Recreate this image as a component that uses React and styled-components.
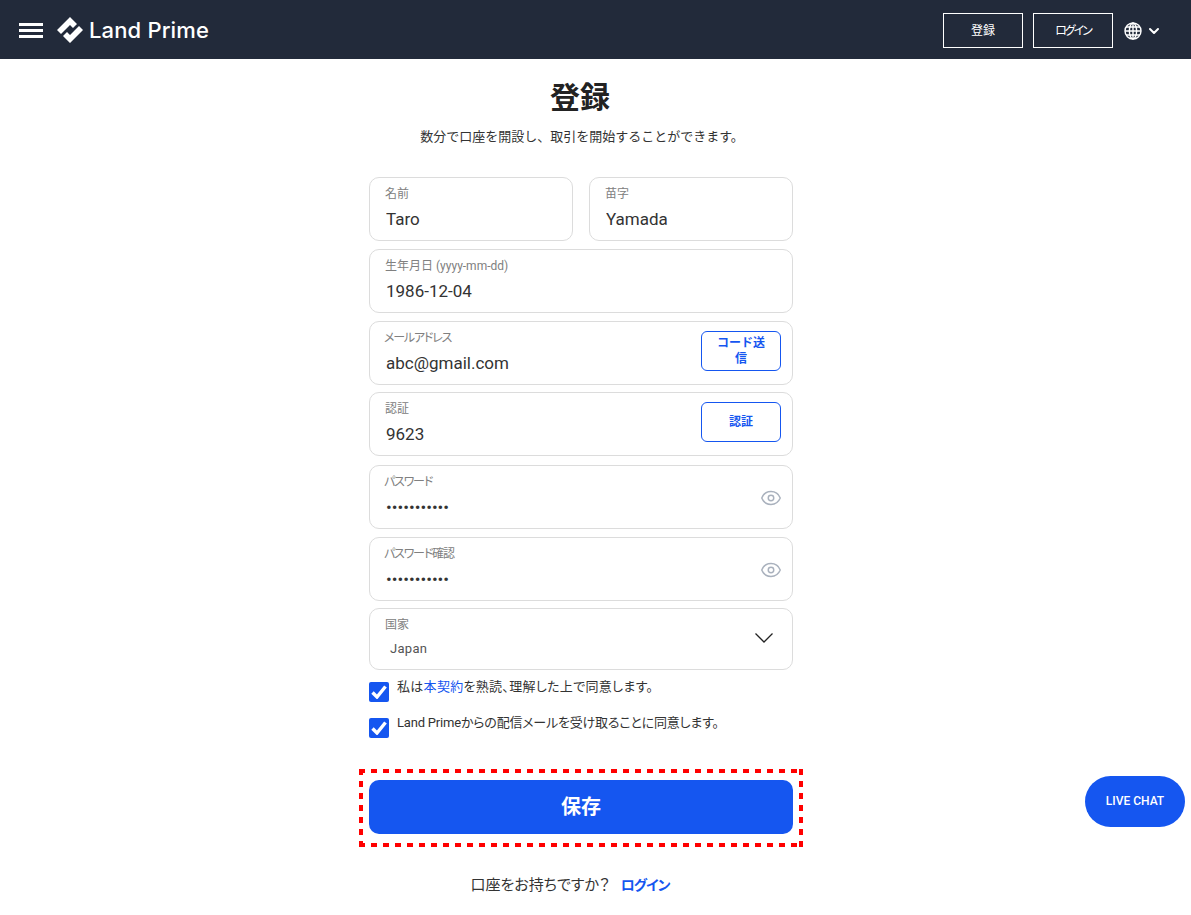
import React from "react";
import styled, { createGlobalStyle } from "styled-components";
import { ChevronDown, Eye } from "lucide-react";

const Global = createGlobalStyle`
  * { box-sizing: border-box; }
  html, body { margin: 0; padding: 0; background: #fff; }
  body {
    font-family: Roboto, "Noto Sans CJK JP", sans-serif;
    color: #333;
  }
`;

const Header = styled.header`
  height: 59px;
  background: #222a3a;
  display: flex;
  align-items: center;
  padding: 0 30px 0 19px;
`;

const Burger = styled.div`
  width: 24px;
  display: flex;
  flex-direction: column;
  gap: 3px;
  margin: 2px 14px 0 0;
  span {
    height: 3px;
    background: #fff;
  }
`;

const LogoText = styled.span`
  font-family: Inter, sans-serif;
  font-size: 22px;
  font-weight: 500;
  letter-spacing: 0.15px;
  color: #fff;
  margin-left: 6px;
`;

const HeaderRight = styled.div`
  margin-left: auto;
  display: flex;
  align-items: center;
  gap: 10px;
  padding-top: 2px;
`;

const HeaderButton = styled.div`
  width: 80px;
  height: 35px;
  padding-bottom: 2px;
  border: 1px solid #fff;
  color: #fff;
  font-size: 12px;
  font-feature-settings: "palt";
  letter-spacing: ${(p) => p.$spacing ?? 0}px;
  display: flex;
  align-items: center;
  justify-content: center;
`;

const Lang = styled.div`
  display: flex;
  align-items: center;
  gap: 4px;
  color: #fff;
  margin: 0 -1px 0 1px;
`;

const Main = styled.main`
  width: 424px;
  margin-left: 369px;
`;

const Title = styled.h1`
  margin: 19px 2px 0 0;
  font-size: 30px;
  line-height: 40px;
  font-weight: 700;
  color: #222;
  text-align: center;
`;

const Subtitle = styled.p`
  margin: 9px 0 0 2px;
  font-size: 13px;
  line-height: 20px;
  color: #333;
  text-align: center;
`;

const Form = styled.form`
  margin-top: 30px;
  display: flex;
  flex-direction: column;
`;

const Row = styled.div`
  display: grid;
  grid-template-columns: 1fr 1fr;
  gap: 16px;
`;

const Field = styled.div`
  flex: none;
  min-width: 0;
  height: ${(p) => p.$height ?? 64}px;
  margin-top: ${(p) => p.$top ?? 0}px;
  border: 1px solid #dcdcdc;
  border-radius: 10px;
  background: #fff;
  display: flex;
  align-items: center;
  padding: 0 11px 2px 15px;
`;

const FieldBody = styled.div`
  flex: 1;
  min-width: 0;
  display: flex;
  flex-direction: column;
`;

const Label = styled.label`
  font-size: 12px;
  line-height: 16px;
  color: #808080;
  font-feature-settings: "palt";
  letter-spacing: ${(p) => (p.$tight ? "-1.2px" : "0")};
  margin-left: ${(p) => (p.$tight ? "-1px" : "0")};
  small {
    font-size: 12px;
  }
`;

const Input = styled.input`
  border: 0;
  outline: 0;
  padding: 0;
  margin: 5px 0 0 1px;
  width: 100%;
  font: inherit;
  font-size: 17px;
  height: 24px;
  color: #333;
  background: transparent;
`;

const SelectValue = styled.div`
  font-size: 13px;
  letter-spacing: 0.3px;
  line-height: 18px;
  margin: 7px 0 1px 5px;
  color: #555;
`;

const CodeButton = styled.button`
  width: 80px;
  height: 40px;
  padding: 0 12px;
  flex: none;
  margin-bottom: 2px;
  border: 1px solid #1556f0;
  border-radius: 6px;
  background: #fff;
  color: #1556f0;
  font: inherit;
  font-size: 12px;
  font-weight: 700;
  line-height: 16px;
`;

const EyeIcon = styled(Eye)`
  color: #a9b1bd;
  margin: 4px -1px 0 0;
`;

const Caret = styled.svg`
  margin-right: 8px;
`;

const CheckRow = styled.div`
  display: flex;
  gap: 8px;
  margin-top: ${(p) => p.$top}px;
  font-size: 13px;
  line-height: 16px;
  letter-spacing: ${(p) => p.$spacing}px;
  color: #333;
  font-feature-settings: "palt";
  a {
    color: #1556f0;
    text-decoration: none;
  }
`;

const Box = styled.span`
  width: 20px;
  height: 20px;
  flex: none;
  border-radius: 2px;
  background: #1556f0;
  display: flex;
  align-items: center;
  justify-content: center;
`;

const CheckText = styled.span`
  margin-top: -3px;
`;

/* the dash pattern is a 6 on / 6 off gradient, a dashed border comes out too long */
const SaveFrame = styled.div`
  margin: 31px -10px 0;
  padding: 11px 10px 13px;
  background-image:
    repeating-linear-gradient(90deg, #ff0000 0 6px, transparent 6px 12px),
    repeating-linear-gradient(90deg, #ff0000 0 6px, transparent 6px 12px),
    repeating-linear-gradient(180deg, #ff0000 0 6px, transparent 6px 12px),
    repeating-linear-gradient(180deg, #ff0000 0 6px, transparent 6px 12px);
  background-size: 100% 4px, 100% 4px, 4px 100%, 4px 100%;
  background-position: 0 0, 0 100%, 0 0, 100% 0;
  background-repeat: no-repeat;
`;

const SaveButton = styled.button`
  display: block;
  width: 100%;
  height: 54px;
  padding: 0 0 3px;
  border: 0;
  border-radius: 10px;
  background: #1556f0;
  color: #fff;
  font: inherit;
  font-size: 20px;
  font-weight: 700;
`;

const LoginLine = styled.p`
  margin: 28px 22px 0 0;
  font-size: 15px;
  line-height: 20px;
  text-align: center;
  color: #333;
  font-feature-settings: "palt";
  a {
    margin-left: 11px;
    color: #1556f0;
    font-size: 14px;
    font-weight: 700;
    letter-spacing: -1px;
    text-decoration: none;
  }
`;

const LiveChat = styled.div`
  position: fixed;
  left: 1085px;
  top: 776px;
  width: 100px;
  height: 51px;
  padding-bottom: 2px;
  border-radius: 26px;
  background: #1556f0;
  color: #fff;
  font-size: 12px;
  font-weight: 500;
  display: flex;
  align-items: center;
  justify-content: center;
`;

const Logo = () => (
  <svg width="26" height="26" viewBox="0 0 26 26" fill="#fff">
    <path d="M0 13 L13 0 L20 7 L16 11 L13 8 L8 13 L4 17 Z" />
    <path d="M26 13 L13 26 L6 19 L10 15 L13 18 L18 13 L22 9 Z" />
  </svg>
);

const Globe = () => (
  <svg width="18" height="18" viewBox="0 0 18 18" fill="none" stroke="#fff" strokeWidth="1.4">
    <circle cx="9" cy="9" r="8" />
    <ellipse cx="9" cy="9" rx="3.6" ry="8" />
    <path d="M9 1v16M1 9h16M2 5h14M2 13h14" />
  </svg>
);

const Tick = () => (
  <svg width="16" height="14" viewBox="0 0 16 14" fill="none" stroke="#fff" strokeWidth="3.4">
    <path d="M1.5 7.5 L6 12 L14.5 1.5" />
  </svg>
);

const TextField = ({ label, tight, value, type, children, top, height }) => (
  <Field $top={top} $height={height}>
    <FieldBody>
      <Label $tight={tight}>{label}</Label>
      <Input type={type ?? "text"} defaultValue={value} readOnly />
    </FieldBody>
    {children}
  </Field>
);

const App = () => {
  return (
    <>
      <Global />
      <Header>
        <Burger>
          <span />
          <span />
          <span />
        </Burger>
        <Logo />
        <LogoText>Land Prime</LogoText>
        <HeaderRight>
          <HeaderButton>登録</HeaderButton>
          <HeaderButton $spacing={-2}>ログイン</HeaderButton>
          <Lang>
            <Globe />
            <ChevronDown size={16} strokeWidth={3} />
          </Lang>
        </HeaderRight>
      </Header>
      <Main>
        <Title>登録</Title>
        <Subtitle>数分で口座を開設し、取引を開始することができます。</Subtitle>
        <Form>
          <Row>
            <TextField label="名前" value="Taro" />
            <TextField label="苗字" value="Yamada" />
          </Row>
          <TextField top={8} label={<>生年月日 <small>(yyyy-mm-dd)</small></>} value="1986-12-04" />
          <TextField top={8} tight label="メールアドレス" value="abc@gmail.com">
            <CodeButton type="button">コード送信</CodeButton>
          </TextField>
          <TextField top={7} label="認証" value="9623">
            <CodeButton type="button">認証</CodeButton>
          </TextField>
          <TextField top={9} tight label="パスワード" value="Password123" type="password">
            <EyeIcon size={22} strokeWidth={1.6} />
          </TextField>
          <TextField top={8} tight label="パスワード確認" value="Password123" type="password">
            <EyeIcon size={22} strokeWidth={1.6} />
          </TextField>
          <Field $top={7} $height={62}>
            <FieldBody>
              <Label>国家</Label>
              <SelectValue>Japan</SelectValue>
            </FieldBody>
            <Caret width="18" height="10" viewBox="0 0 18 10" fill="none" stroke="#222" strokeWidth="1.3">
              <path d="M0.5 0.5 L9 9 L17.5 0.5" />
            </Caret>
          </Field>
          <CheckRow $top={12} $spacing={0.3}>
            <Box><Tick /></Box>
            <CheckText>私は<a href="#terms">本契約</a>を熟読、理解した上で同意します。</CheckText>
          </CheckRow>
          <CheckRow $top={16} $spacing={-0.2}>
            <Box><Tick /></Box>
            <CheckText>Land Primeからの配信メールを受け取ることに同意します。</CheckText>
          </CheckRow>
          <SaveFrame>
            <SaveButton type="button">保存</SaveButton>
          </SaveFrame>
        </Form>
        <LoginLine>口座をお持ちですか？<a href="#login">ログイン</a></LoginLine>
      </Main>
      <LiveChat>LIVE CHAT</LiveChat>
    </>
  );
};

export default App;
